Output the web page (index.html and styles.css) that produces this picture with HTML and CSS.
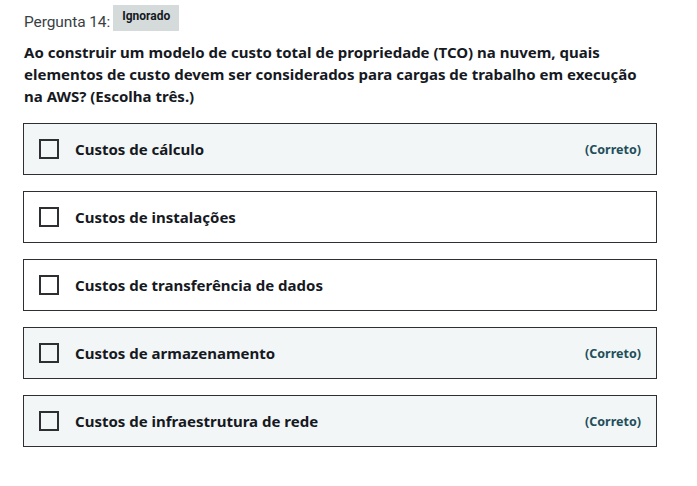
FILE: index.html
```html
<!DOCTYPE html>
<html lang="pt">
<head>
<meta charset="utf-8">
<link rel="stylesheet" href="styles.css">
</head>
<body>
<div class="page">
  <div class="header">
    <span class="label">Pergunta 14:</span>
    <span class="badge">Ignorado</span>
  </div>
  <p class="question">Ao construir um modelo de custo total de propriedade (TCO) na nuvem, quais elementos de custo devem ser considerados para cargas de trabalho em execução na AWS? (Escolha três.)</p>
  <div class="options">
    <div class="option correct"><span class="box"></span><span class="text">Custos de cálculo</span><span class="tag">(Correto)</span></div>
    <div class="option"><span class="box"></span><span class="text">Custos de instalações</span></div>
    <div class="option"><span class="box"></span><span class="text">Custos de transferência de dados</span></div>
    <div class="option correct"><span class="box"></span><span class="text">Custos de armazenamento</span><span class="tag">(Correto)</span></div>
    <div class="option correct"><span class="box"></span><span class="text">Custos de infraestrutura de rede</span><span class="tag">(Correto)</span></div>
  </div>
</div>
</body>
</html>
```

FILE: styles.css
```css
html, body { margin: 0; padding: 0; background: #fff; }
body { font-family: "Noto Sans", "Liberation Sans", sans-serif; color: #16191f; }
.page { padding: 5px 40px 0 23px; width: 634px; }
.header { display: flex; align-items: flex-start; height: 26px; }
.label { font-family: Roboto, "Liberation Sans", sans-serif; font-size: 15.5px; color: #3a3f45; margin-top: 8px; margin-left: 1px; letter-spacing: -0.1px; }
.badge { font-family: Roboto, "Liberation Sans", sans-serif; background: #d5dbdb; font-size: 12px; font-weight: 700; padding: 5px 9px 9px 9px; margin-left: 3px; line-height: 12px; }
.question { font-size: 15px; font-weight: 700; line-height: 22px; margin: 10px 0 0 1px; letter-spacing: 0; max-width: 634px; }
.options { display: flex; flex-direction: column; gap: 16px; margin-top: 16px; }
.option { display: flex; align-items: center; height: 50px; border: 1px solid #2d2f33; padding: 0 15px 0 15px; background: #fff; }
.option.correct { background: #f2f6f6; }
.box { width: 16px; height: 16px; border: 2px solid #2d2f33; flex: none; }
.text { font-size: 15px; font-weight: 700; margin-left: 16px; flex: 1; letter-spacing: 0; }
.tag { font-size: 12.5px; font-weight: 700; color: #1f4e5a; }
```
